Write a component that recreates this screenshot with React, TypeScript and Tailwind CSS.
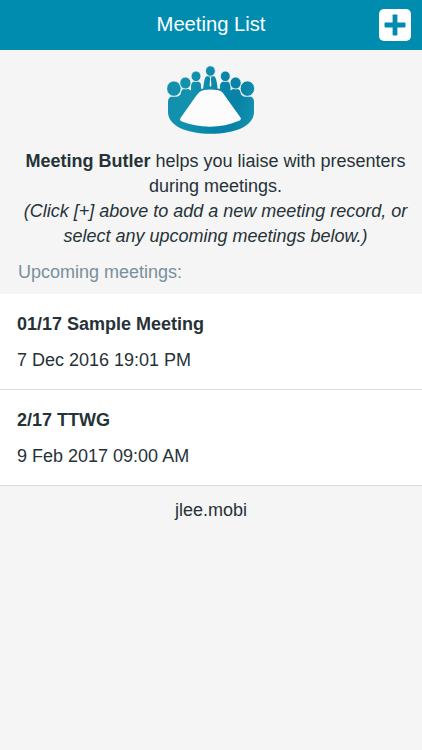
const meetings = [
  { name: '01/17 Sample Meeting', time: '7 Dec 2016 19:01 PM' },
  { name: '2/17 TTWG', time: '9 Feb 2017 09:00 AM' },
];

function MeetingLogo() {
  return (
    <svg width="88" height="68" viewBox="0 0 88 68" className="block" aria-hidden="true">
      <defs>
        <linearGradient id="teal" gradientUnits="userSpaceOnUse" x1="0" y1="24" x2="88" y2="46">
          <stop offset="0" stopColor="#128fac" />
          <stop offset="0.25" stopColor="#1292ae" />
          <stop offset="0.6" stopColor="#0984a8" />
          <stop offset="0.8" stopColor="#0883a7" />
          <stop offset="1" stopColor="#1292ae" />
        </linearGradient>
      </defs>
      <g fill="url(#teal)">
        {/* shoulders and the outer rim of the table */}
        <path d="M1 46 V36 Q1 31 5 30.5 H11 L13.5 28.5 Q14 22.5 18.5 22.5 Q21.5 22.3 24 24.5 V20 Q24 15.3 29 15.3 Q34.2 15.3 34.2 20 V26 H53 V20 Q53 15.3 58.3 15.3 Q63.5 15.3 63.5 20 V24.5 Q66 22.3 69 22.5 Q73.5 22.5 74 28.5 L76.5 30.5 H83 Q87 31 87 36 V46 C87 60 68 67.8 44 67.8 S1 60 1 46 Z" />
        <path d="M34.2 17 H53 V27 H34.2 Z" fill="#f5f5f5" />
        <path d="M36 25 C36.5 18 37.5 10.3 40 10.3 H46.7 C49.2 10.3 50.3 18 50.7 25 Z" />
        {/* heads */}
        <g stroke="#f5f5f5" strokeWidth="0.8">
          <ellipse cx="6.9" cy="22.6" rx="7.2" ry="7.7" />
          <ellipse cx="18.4" cy="17" rx="5.6" ry="6" />
          <ellipse cx="29" cy="10.3" rx="4.9" ry="5.3" />
          <ellipse cx="43.4" cy="5" rx="4.9" ry="5.2" />
          <ellipse cx="58.3" cy="10.3" rx="4.9" ry="5.3" />
          <ellipse cx="68.6" cy="17" rx="5.6" ry="6" />
          <ellipse cx="80.4" cy="22.6" rx="7.2" ry="7.7" />
        </g>
        {/* dark rim between the neighbours and the table top */}
        <path d="M27 32 L34.2 22.8 Q43.5 21.5 53 22.8 L60 32 Z" />
      </g>
      <path d="M42.7 11 H44.3 L43.9 12.8 L44.4 19.5 L43.5 21 L42.6 19.5 L43.1 12.8 Z" fill="#f5f8f8" />
      <path d="M37 24 Q43.5 23 50 24 C54.5 24.5 56 26.5 58 30 L73.5 51.5 Q74.8 53.6 72 54.8 C55 62.5 32 62.5 15 55.5 Q12.2 54.5 13.5 52 L29 30 C31.5 26.5 33.5 24.5 37 24 Z" fill="#fcfcfc" />
    </svg>
  );
}

export default function App() {
  return (
    <div className="flex min-h-[750px] flex-col bg-[#f5f5f5] font-['Liberation_Sans',Arial,sans-serif] text-[18px] text-[#263238]">
      <header className="grid h-[50px] grid-cols-[1fr_auto_1fr] items-center bg-[#008caf] px-[11px] text-white">
        <h1 className="col-start-2 pb-[2px] text-[20.2px] leading-[48px] whitespace-nowrap">Meeting List</h1>
        <button
          aria-label="Add meeting"
          className="flex size-[32px] items-center justify-center justify-self-end rounded-[5px] bg-white"
        >
          <svg width="22" height="22" viewBox="0 0 22 22" fill="#008caf">
            <rect x="8.6" y="0.5" width="4.8" height="21" rx="0.8" />
            <rect x="0.5" y="8.6" width="21" height="4.8" rx="0.8" />
          </svg>
        </button>
      </header>

      <section className="flex flex-col items-center pt-[16px]">
        <MeetingLogo />
        <p className="mt-[15px] pl-[9px] text-center leading-[25px] whitespace-nowrap">
          <b>Meeting Butler</b> helps you liaise with presenters
          <br />
          during meetings.
          <br />
          <i>
            (Click [+] above to add a new meeting record, or
            <br />
            select any upcoming meetings below.)
          </i>
        </p>
      </section>

      <h2 className="mt-[11px] h-[34px] pl-[18px] leading-[25px] text-[#78909c]">Upcoming meetings:</h2>

      <ul>
        {meetings.map((meeting) => (
          <li key={meeting.name} className="h-[96px] border-b border-[#d9dce2] bg-white pt-[12px] pl-[17px]">
            <h3 className="leading-[36px] font-bold">{meeting.name}</h3>
            <p className="leading-[36px]">{meeting.time}</p>
          </li>
        ))}
      </ul>

      <footer className="pt-[12px] text-center leading-[25px]">jlee.mobi</footer>
    </div>
  );
}
